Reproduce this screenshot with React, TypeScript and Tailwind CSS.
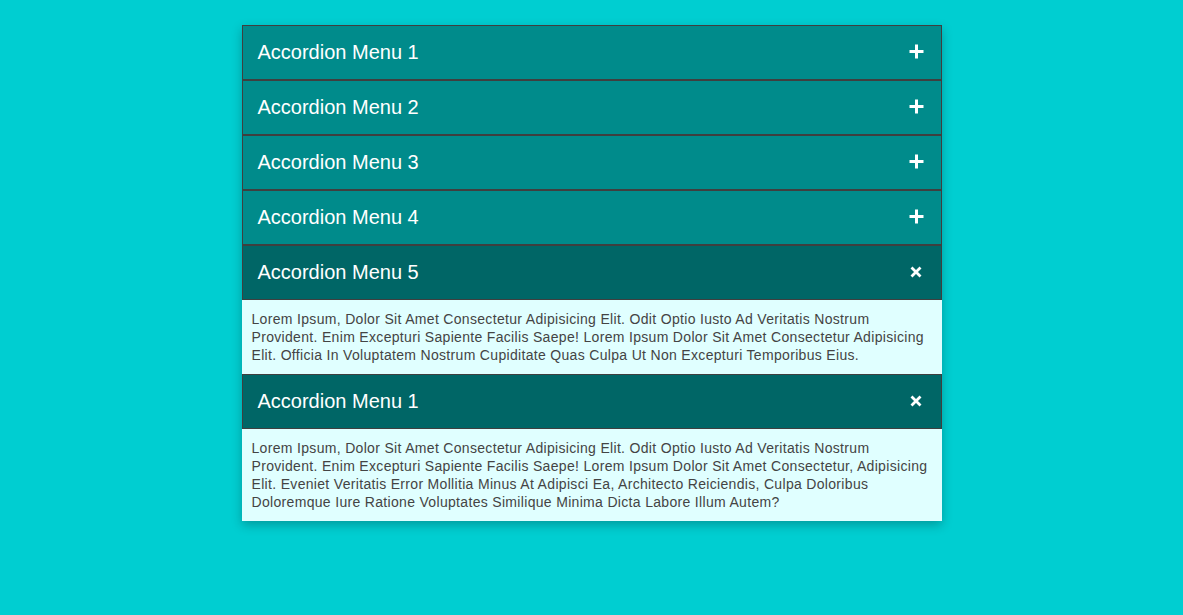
import { useState } from "react"

const items = [
  { title: "Accordion Menu 1", body: "" },
  { title: "Accordion Menu 2", body: "" },
  { title: "Accordion Menu 3", body: "" },
  { title: "Accordion Menu 4", body: "" },
  {
    title: "Accordion Menu 5",
    body: "Lorem Ipsum, Dolor Sit Amet Consectetur Adipisicing Elit. Odit Optio Iusto Ad Veritatis Nostrum Provident. Enim Excepturi Sapiente Facilis Saepe! Lorem Ipsum Dolor Sit Amet Consectetur Adipisicing Elit. Officia In Voluptatem Nostrum Cupiditate Quas Culpa Ut Non Excepturi Temporibus Eius.",
  },
  {
    title: "Accordion Menu 1",
    body: "Lorem Ipsum, Dolor Sit Amet Consectetur Adipisicing Elit. Odit Optio Iusto Ad Veritatis Nostrum Provident. Enim Excepturi Sapiente Facilis Saepe! Lorem Ipsum Dolor Sit Amet Consectetur, Adipisicing Elit. Eveniet Veritatis Error Mollitia Minus At Adipisci Ea, Architecto Reiciendis, Culpa Doloribus Doloremque Iure Ratione Voluptates Similique Minima Dicta Labore Illum Autem?",
  },
]

const PlusIcon = () => (
  <svg width="15" height="15" viewBox="0 0 15 15">
    <path d="M7.5 0.5v14M0.5 7.5h14" stroke="white" strokeWidth="3" />
  </svg>
)

const CloseIcon = () => (
  <svg width="12" height="12" viewBox="0 0 12 12">
    <path d="M1.5 1.5l9 9M10.5 1.5l-9 9" stroke="white" strokeWidth="2.8" />
  </svg>
)

export default function App() {
  const [open, setOpen] = useState<number[]>([4, 5])

  const toggle = (i: number) =>
    setOpen(open.includes(i) ? open.filter((x) => x !== i) : [...open, i])

  return (
    <div className="min-h-screen bg-[#00ced1] pt-[25px] font-[family-name:'Liberation_Sans',Arial,sans-serif]">
      <div className="mx-auto w-[700px] shadow-[0_4px_10px_rgba(0,0,0,0.25)]">
        {items.map((item, i) => {
          const isOpen = open.includes(i)
          return (
            <div key={i}>
              <button
                onClick={() => toggle(i)}
                className={
                  "flex h-[55px] w-full items-center justify-between border border-[#3f3f3f] pb-[2px] pl-[15px] pr-[17px] text-left text-[20px] text-white " +
                  (isOpen ? "bg-[#006666]" : "bg-[#008b8b]")
                }
              >
                <span>{item.title}</span>
                <span className="flex w-[15px] items-center justify-center">
                  {isOpen ? <CloseIcon /> : <PlusIcon />}
                </span>
              </button>
              {isOpen && (
                <div className="bg-[#e0ffff] p-[10px] text-[14px] leading-[18px] tracking-[0.32px] text-[#444]">
                  {item.body}
                </div>
              )}
            </div>
          )
        })}
      </div>
    </div>
  )
}
